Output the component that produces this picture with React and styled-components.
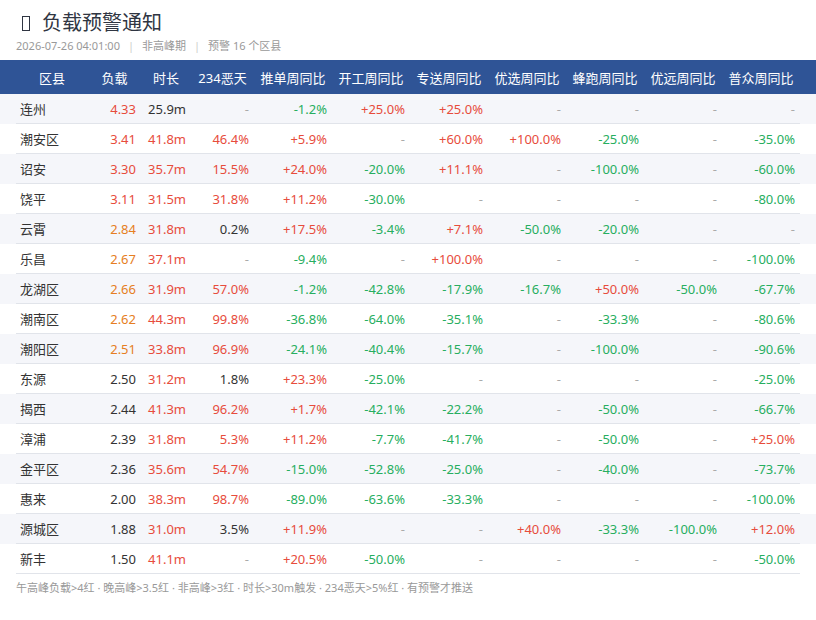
import React from 'react';
import styled, { createGlobalStyle } from 'styled-components';

// Page-wide reset and font
const GlobalStyle = createGlobalStyle`
  body {
    margin: 0;
    background: #fff;
    font-family: "Noto Sans", "Noto Sans CJK SC", sans-serif;
    color: #333;
  }
`;

const Page = styled.div`
  width: 816px;
  padding-top: 9px;
`;

// Title block
const Heading = styled.div`
  padding: 0 16px;
`;

const Title = styled.h1`
  margin: 0;
  font-size: 20px;
  font-weight: 400;
  line-height: 28px;
  color: #2f3542;
  display: flex;
  align-items: center;
  gap: 12px;
  padding-left: 6px;
`;

// Empty glyph box standing in for the icon
const GlyphBox = styled.span`
  width: 6px;
  height: 13px;
  border: 1.5px solid #2f3542;
  margin-top: 1px;
`;

const Meta = styled.div`
  font-size: 11px;
  line-height: 16px;
  color: #999;
  display: flex;
  gap: 8px;
  margin-top: 1px;
`;

const Sep = styled.span`
  color: #ccc;
`;

// Table
const cols = '72px 53px 50px 63px repeat(7, 78px)';

const HeaderBar = styled.div`
  margin-top: 6px;
  background: #2f5496;
  height: 34px;
  padding: 0 16px;
  display: grid;
  grid-template-columns: ${cols};
  align-items: center;
`;

const HeadCell = styled.div`
  color: #fff;
  font-size: 13px;
  text-align: center;
  white-space: nowrap;
`;

const Row = styled.div`
  background: ${(p) => (p.striped ? '#f5f6fa' : '#fff')};
  padding: 0 16px;
`;

const RowInner = styled.div`
  display: grid;
  grid-template-columns: ${cols};
  align-items: center;
  height: 29px;
  border-bottom: 1px solid #e1e4ea;
`;

const tones = {
  red: '#e74c3c',
  green: '#27ae60',
  orange: '#e67e22',
  dark: '#333',
  muted: '#aaa',
};

const Cell = styled.div`
  font-size: 13px;
  white-space: nowrap;
  text-align: ${(p) => (p.left ? 'left' : 'right')};
  padding: ${(p) => (p.left ? '0 0 0 4px' : '0 5px 0 0')};
  color: ${(p) => tones[p.tone] || tones.dark};
`;

const Footer = styled.div`
  padding: 6px 16px 0;
  font-size: 11px;
  line-height: 16px;
  color: #999;
`;

const headers = ['区县', '负载', '时长', '234恶天', '推单周同比', '开工周同比', '专送周同比', '优选周同比', '蜂跑周同比', '优远周同比', '普众周同比'];

const rows = [
  ['连州', '4.33', '25.9m', '-', '-1.2%', '+25.0%', '+25.0%', '-', '-', '-', '-'],
  ['潮安区', '3.41', '41.8m', '46.4%', '+5.9%', '-', '+60.0%', '+100.0%', '-25.0%', '-', '-35.0%'],
  ['诏安', '3.30', '35.7m', '15.5%', '+24.0%', '-20.0%', '+11.1%', '-', '-100.0%', '-', '-60.0%'],
  ['饶平', '3.11', '31.5m', '31.8%', '+11.2%', '-30.0%', '-', '-', '-', '-', '-80.0%'],
  ['云霄', '2.84', '31.8m', '0.2%', '+17.5%', '-3.4%', '+7.1%', '-50.0%', '-20.0%', '-', '-'],
  ['乐昌', '2.67', '37.1m', '-', '-9.4%', '-', '+100.0%', '-', '-', '-', '-100.0%'],
  ['龙湖区', '2.66', '31.9m', '57.0%', '-1.2%', '-42.8%', '-17.9%', '-16.7%', '+50.0%', '-50.0%', '-67.7%'],
  ['潮南区', '2.62', '44.3m', '99.8%', '-36.8%', '-64.0%', '-35.1%', '-', '-33.3%', '-', '-80.6%'],
  ['潮阳区', '2.51', '33.8m', '96.9%', '-24.1%', '-40.4%', '-15.7%', '-', '-100.0%', '-', '-90.6%'],
  ['东源', '2.50', '31.2m', '1.8%', '+23.3%', '-25.0%', '-', '-', '-', '-', '-25.0%'],
  ['揭西', '2.44', '41.3m', '96.2%', '+1.7%', '-42.1%', '-22.2%', '-', '-50.0%', '-', '-66.7%'],
  ['漳浦', '2.39', '31.8m', '5.3%', '+11.2%', '-7.7%', '-41.7%', '-', '-50.0%', '-', '+25.0%'],
  ['金平区', '2.36', '35.6m', '54.7%', '-15.0%', '-52.8%', '-25.0%', '-', '-40.0%', '-', '-73.7%'],
  ['惠来', '2.00', '38.3m', '98.7%', '-89.0%', '-63.6%', '-33.3%', '-', '-', '-', '-100.0%'],
  ['源城区', '1.88', '31.0m', '3.5%', '+11.9%', '-', '-', '+40.0%', '-33.3%', '-100.0%', '+12.0%'],
  ['新丰', '1.50', '41.1m', '-', '+20.5%', '-50.0%', '-', '-', '-', '-', '-50.0%'],
];

// Pick a colour for each cell from its column and value
const toneFor = (col, v) => {
  if (v === '-') return 'muted';
  if (col === 0) return 'dark';
  if (col === 1) {
    const n = parseFloat(v);
    if (n >= 3) return 'red';
    if (n > 2.5) return 'orange';
    return 'dark';
  }
  if (col === 2) return parseFloat(v) > 30 ? 'red' : 'dark';
  if (col === 3) return parseFloat(v) > 5 ? 'red' : 'dark';
  return v.startsWith('+') ? 'red' : 'green';
};

export default function App() {
  return (
    <Page>
      <GlobalStyle />
      <Heading>
        <Title>
          <GlyphBox />
          <span>负载预警通知</span>
        </Title>
        <Meta>
          <span>2026-07-26 04:01:00</span>
          <Sep>|</Sep>
          <span>非高峰期</span>
          <Sep>|</Sep>
          <span>预警 16 个区县</span>
        </Meta>
      </Heading>
      <HeaderBar>
        {headers.map((h) => (
          <HeadCell key={h}>{h}</HeadCell>
        ))}
      </HeaderBar>
      {rows.map((r, i) => (
        <Row key={r[0]} striped={i % 2 === 0}>
          <RowInner>
            {r.map((v, c) => (
              <Cell key={c} left={c === 0} tone={toneFor(c, v)}>
                {v}
              </Cell>
            ))}
          </RowInner>
        </Row>
      ))}
      <Footer>午高峰负载&gt;4红 · 晚高峰&gt;3.5红 · 非高峰&gt;3红 · 时长&gt;30m触发 · 234恶天&gt;5%红 · 有预警才推送</Footer>
    </Page>
  );
}
